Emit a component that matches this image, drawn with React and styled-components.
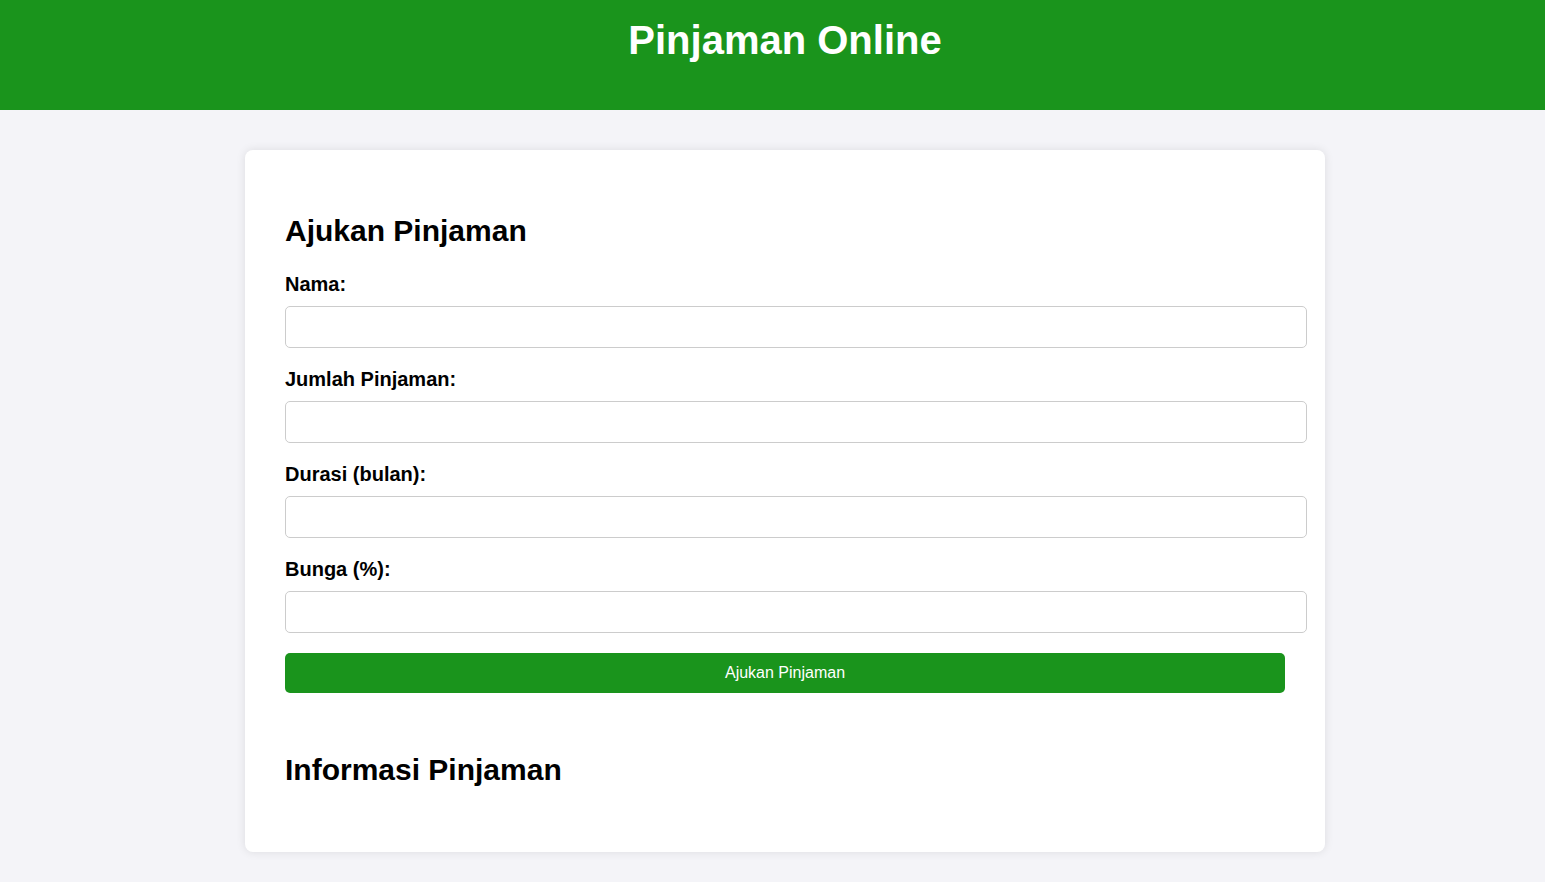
import React from 'react';
import styled, { createGlobalStyle } from 'styled-components';

const GlobalStyle = createGlobalStyle`
  * {
    box-sizing: border-box;
  }
  body {
    margin: 0;
    font-family: "Liberation Sans", Arial, sans-serif;
    background: #f4f4f8;
    color: #000;
  }
`;

const Header = styled.header`
  height: 110px;
  padding: 18px 0 0 25px;
  background: #1a941c;
  text-align: center;

  & h1 {
    margin: 0;
    color: #fff;
    font-size: 40px;
    font-weight: bold;
  }
`;

const Container = styled.div`
  padding: 40px 0 30px 25px;
`;

const Card = styled.main`
  width: 1080px;
  margin: 0 auto;
  padding: 40px;
  background: #fff;
  border-radius: 8px;
  box-shadow: 0 0 10px rgba(0, 0, 0, 0.1);
`;

const Title = styled.h2`
  margin: ${p => (p.$first ? '24px 0 25px' : '60px 0 25px')};
  font-size: 30px;
  font-weight: bold;
`;

const Form = styled.form`
  display: flex;
  flex-direction: column;
`;

const Label = styled.label`
  display: block;
  margin-bottom: 10px;
  font-size: 20px;
  font-weight: bold;
`;

const Input = styled.input`
  width: calc(100% + 22px);
  height: 42px;
  margin-bottom: 20px;
  padding: 10px;
  border: 1px solid #ccc;
  border-radius: 5px;
  font: inherit;
  font-size: 16px;
`;

const Button = styled.button`
  width: 100%;
  height: 40px;
  padding: 0;
  border: none;
  border-radius: 5px;
  background: #1a941c;
  color: #fff;
  font-family: inherit;
  font-size: 16px;
  cursor: pointer;
`;

const fields = [
  { id: 'nama', label: 'Nama:', type: 'text' },
  { id: 'jumlah', label: 'Jumlah Pinjaman:', type: 'number' },
  { id: 'durasi', label: 'Durasi (bulan):', type: 'number' },
  { id: 'bunga', label: 'Bunga (%):', type: 'number' },
];

const App = () => (
  <>
    <GlobalStyle />
    <Header>
      <h1>Pinjaman Online</h1>
    </Header>
    <Container>
      <Card>
        <Title $first>Ajukan Pinjaman</Title>
        <Form onSubmit={e => e.preventDefault()}>
          {fields.map(f => (
            <React.Fragment key={f.id}>
              <Label htmlFor={f.id}>{f.label}</Label>
              <Input id={f.id} type={f.type} />
            </React.Fragment>
          ))}
          <Button type="submit">Ajukan Pinjaman</Button>
        </Form>
        <Title>Informasi Pinjaman</Title>
      </Card>
    </Container>
  </>
);

export default App;
